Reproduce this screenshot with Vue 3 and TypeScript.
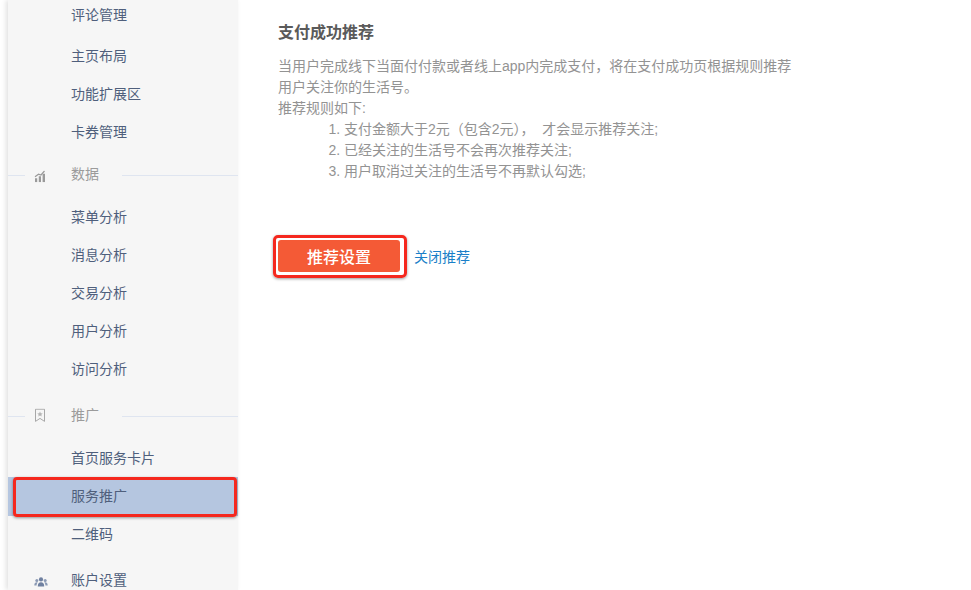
<script setup lang="ts">
const dataItems: string[] = ['菜单分析', '消息分析', '交易分析', '用户分析', '访问分析']
const ruleItems: string[] = [
  '支付金额大于2元（包含2元），\u00a0 才会显示推荐关注;',
  '已经关注的生活号不会再次推荐关注;',
  '用户取消过关注的生活号不再默认勾选;',
]
</script>

<template>
  <div class="page">
    <aside class="sidebar">
      <div class="item first">评论管理</div>
      <div class="item">主页布局</div>
      <div class="item">功能扩展区</div>
      <div class="item">卡券管理</div>

      <div class="group">
        <svg class="group-icon" viewBox="0 0 12 12" width="12" height="12">
          <path d="M1 8h2.200v4H1zM4.800 6h2.200v6H4.800zM8.600 3.500h2.400V12H8.600z" fill="#9a9a9a" />
          <path d="M1 6.500l3.500-2.500L7 4.800 10.500 .8" fill="none" stroke="#9a9a9a" stroke-width="1.200" />
        </svg>
        <span class="group-name">数据</span>
      </div>
      <div v-for="name in dataItems" :key="name" class="item">{{ name }}</div>

      <div class="group promo">
        <svg class="group-icon" viewBox="0 0 12 14" width="12" height="14">
          <path d="M1.500 .8h9v12.200L6 10 1.500 13z" fill="none" stroke="#a8a8a8" stroke-width="1" />
          <path d="M6 3l.8 1.800 1.900.2-1.400 1.300.4 1.900L6 7.200l-1.700 1 .4-1.900L3.300 5l1.900-.2z" fill="#b4b4b4" />
        </svg>
        <span class="group-name">推广</span>
      </div>
      <div class="item">首页服务卡片</div>
      <div class="item active">服务推广<span class="mark"></span></div>
      <div class="item">二维码</div>

      <div class="group account">
        <svg class="group-icon" viewBox="0 0 14 10" width="14" height="10">
          <circle cx="7" cy="2.400" r="2.100" fill="#6f80a0" />
          <circle cx="2.800" cy="3.600" r="1.500" fill="#8a99b4" />
          <circle cx="11.200" cy="3.600" r="1.500" fill="#8a99b4" />
          <path d="M3.800 9.500c0-3 1.200-4.200 3.200-4.200s3.200 1.200 3.200 4.200z" fill="#6f80a0" />
          <path d="M.3 8.500c0-2 1-3.200 2.500-3.200l1 .3c-.8.7-1.200 1.600-1.200 2.900zM13.700 8.500c0-2-1-3.200-2.500-3.200l-1 .3c.8.7 1.200 1.600 1.200 2.900z" fill="#8a99b4" />
        </svg>
        <span class="group-name">账户设置</span>
      </div>
    </aside>

    <main class="content">
      <h2 class="title">支付成功推荐</h2>
      <p class="desc">当用户完成线下当面付付款或者线上app内完成支付，将在支付成功页根据规则推荐<br />用户关注你的生活号。<br />推荐规则如下:</p>
      <ol class="rules">
        <li v-for="rule in ruleItems" :key="rule">{{ rule }}</li>
      </ol>
      <div class="actions">
        <div class="btn-mark">
          <button class="btn" type="button">推荐设置</button>
        </div>
        <a class="link" href="#">关闭推荐</a>
      </div>
    </main>
  </div>
</template>

<style>
html,
body {
  margin: 0;
  height: 590px;
  overflow: hidden;
  background: #fff;
}
</style>

<style scoped>
.page {
  display: flex;
  height: 590px;
  overflow: hidden;
  font-family: "Liberation Sans", "Noto Sans CJK SC", sans-serif;
}

.sidebar {
  flex: none;
  width: 230px;
  margin-left: 8px;
  background: #f6f6f6;
  box-shadow: -2px 0 5px rgba(0, 0, 0, 0.12);
}

.item {
  position: relative;
  height: 38px;
  padding-left: 63px;
  line-height: 38px;
  font-size: 14px;
  color: #4f5f7c;
}

.item.first {
  margin-top: -4px;
  margin-bottom: 3px;
}

.item.active {
  background: #b5c6e0;
  box-shadow: 0 1px 0 #b5c6e0;
}

/* red annotation drawn over the selected row */
.mark {
  position: absolute;
  top: 0;
  left: 5px;
  right: 1px;
  bottom: -2px;
  border: 3px solid #f5281e;
  border-radius: 4px;
  box-shadow: 0 1px 3px rgba(0, 0, 0, 0.4);
}

.group {
  position: relative;
  display: flex;
  align-items: center;
  height: 47px;
  padding-left: 63px;
  font-size: 14px;
  color: #9b9b9b;
}

.group.promo {
  height: 51px;
}

.group::before,
.group::after {
  content: "";
  position: absolute;
  top: 24px;
  height: 1px;
  background: #dfe5f0;
}

.group::before {
  left: 0;
  width: 17px;
}

.group::after {
  left: 114px;
  right: 0;
}

.group.promo::before,
.group.promo::after {
  top: 28px;
}

.group.account {
  margin-top: 4px;
  color: #4f5f7c;
}

.group.account::before,
.group.account::after {
  display: none;
}

.group-icon {
  position: absolute;
  left: 26px;
  top: 50%;
  transform: translateY(-40%);
}

.group-name {
  position: relative;
  top: -2px;
}

.promo .group-name {
  top: 0;
}

.content {
  flex: 1;
  padding: 22px 0 0 40px;
}

.title {
  margin: 0;
  font-size: 16px;
  line-height: 21px;
  font-weight: 700;
  color: #5a5a5a;
}

.desc {
  margin: 13px 0 0;
  width: 530px;
  font-size: 14px;
  line-height: 21px;
  color: #939393;
}

.rules {
  margin: 0;
  padding-left: 66px;
  font-size: 14px;
  line-height: 21px;
  color: #939393;
}

.actions {
  display: flex;
  align-items: center;
  gap: 7px;
  margin-top: 53px;
  margin-left: -5px;
}

.btn-mark {
  padding: 2px 4px 3px 2px;
  border: 3px solid #f5281e;
  border-radius: 5px;
  box-shadow: 0 1px 3px rgba(0, 0, 0, 0.4);
}

.btn {
  display: block;
  width: 122px;
  height: 32px;
  padding: 0;
  border: 0;
  border-radius: 3px;
  background: #f45a36;
  color: #fff;
  font-family: inherit;
  font-size: 16px;
  font-weight: 500;
}

.link {
  margin-bottom: 2px;
  font-size: 14px;
  color: #1a7fc8;
  text-decoration: none;
}
</style>
